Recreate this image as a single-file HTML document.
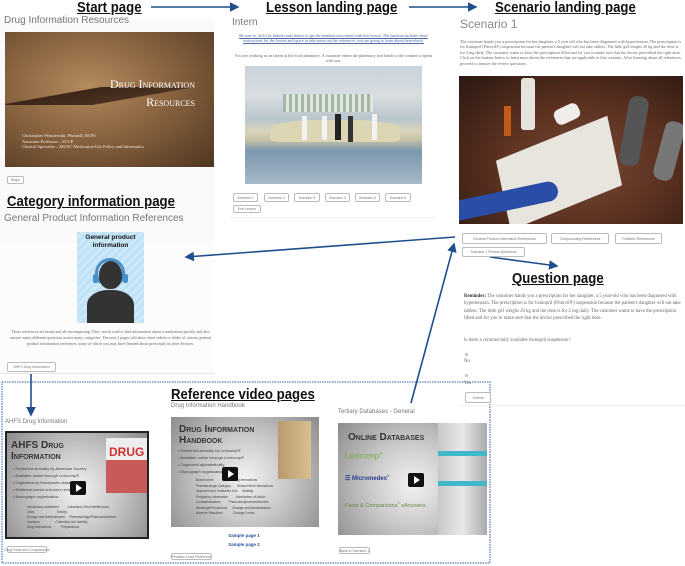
<!DOCTYPE html>
<html><head><meta charset="utf-8">
<style>
*{margin:0;padding:0;box-sizing:border-box}
body{width:685px;height:566px;background:#fff;position:relative;overflow:hidden;font-family:"Liberation Sans",sans-serif;color:#555}
.a{position:absolute}
.h{position:absolute;font-family:"Liberation Sans Narrow","Liberation Sans",sans-serif;font-weight:bold;font-size:15px;color:#111;text-decoration:underline;white-space:nowrap;line-height:13px;transform:scaleX(0.88);transform-origin:0 0}
.t{position:absolute;font-size:10px;color:#777;white-space:nowrap}
.btn{position:absolute;border:1px solid #bbb;border-radius:2px;font-size:3.5px;color:#777;display:flex;align-items:center;justify-content:center;background:#fff;white-space:nowrap}
.sm{position:absolute;font-family:"Liberation Serif",serif;font-size:4.2px;line-height:5.4px;color:#666}
.play{position:absolute;width:16px;height:14px;background:#111;border-radius:2px}
.play:after{content:"";position:absolute;left:6px;top:3px;border-left:6px solid #fff;border-top:4px solid transparent;border-bottom:4px solid transparent}
.vid{position:absolute;background:radial-gradient(circle at 50% 55%,#f2f2f2 0%,#c8c8c8 45%,#8c8c8c 100%);overflow:hidden}
.vt{position:absolute;font-weight:bold;font-variant:small-caps;color:#333;font-size:10px;line-height:11px}
.vb{position:absolute;font-size:4px;color:#444;line-height:7px}
</style></head><body>
<div class="a" style="left:0;top:18px;width:214px;height:226px;background:#fafafa"></div>
<div class="a" style="left:0;top:243px;width:214px;height:131px;background:#fcfcfc;border-bottom:1px solid #e6e6e6"></div>

<div class="h" style="left:77px;top:1px">Start page</div>
<div class="h" style="left:266px;top:1px">Lesson landing page</div>
<div class="h" style="left:495px;top:1px">Scenario landing page</div>
<div class="h" style="left:7px;top:195px">Category information page</div>
<div class="h" style="left:512px;top:272px">Question page</div>
<div class="h" style="left:171px;top:388px">Reference video pages</div>

<svg class="a" style="left:0;top:0" width="685" height="566">
<defs><marker id="m" markerWidth="6" markerHeight="6" refX="5" refY="3" orient="auto"><path d="M0,0 L6,3 L0,6 z" fill="#1f4e8c"/></marker></defs>
<g stroke="#1f4e8c" stroke-width="1.6" fill="none">
<line x1="151" y1="7" x2="238" y2="7" marker-end="url(#m)"/>
<line x1="409" y1="7" x2="476" y2="7" marker-end="url(#m)"/>
<line x1="455" y1="237" x2="186" y2="257" marker-end="url(#m)"/>
<line x1="490" y1="257" x2="557" y2="266" marker-end="url(#m)"/>
<line x1="411" y1="403" x2="454" y2="244" marker-end="url(#m)"/>
<line x1="31" y1="374" x2="31" y2="415" marker-end="url(#m)"/>
</g>
<rect x="2" y="382" width="488" height="181" fill="none" stroke="#2a5fa5" stroke-width="1" stroke-dasharray="1.5,1"/>
</svg>

<div class="t" style="left:4px;top:15px;font-size:10px">Drug Information Resources</div>
<div class="a" style="left:5px;top:32px;width:209px;height:135px;background:radial-gradient(ellipse at 40% 40%,#b48a5e 0%,#8a6440 45%,#4e3521 100%)">
 <div class="a" style="left:0;top:55px;width:209px;height:18px;background:linear-gradient(170deg,transparent 30%,#3a2618 32%,#4a3020 60%,transparent 62%)"></div>
 <div class="a" style="left:75px;top:43px;font-family:'Liberation Serif',serif;font-variant:small-caps;color:#fff;font-size:12px;line-height:18px;text-align:right;width:115px">Drug Information<br>Resources</div>
 <div class="a" style="left:17px;top:101px;font-family:'Liberation Serif',serif;color:#f4e6d6;font-size:4.5px;line-height:5.5px">Christopher Wisniewski, PharmD, BCPS<br>Associate Professor – SCCP<br>Clinical Specialist – MUSC Medication Use Policy and Informatics</div>
</div>
<div class="btn" style="left:7px;top:176px;width:17px;height:8px">Begin</div>

<div class="t" style="left:232px;top:17px;font-size:10px">Intern</div>
<div class="sm" style="left:232px;top:33px;width:203px;text-align:center;color:#4a6aa8;text-decoration:underline">Be sure to click the linked cards below to get the handout associated with this lesson. The handout includes brief instructions for the lesson and space to take notes on the references you are going to learn about henceforth.</div>
<div class="sm" style="left:232px;top:53px;width:203px;text-align:center">You are working as an intern at the local pharmacy. A customer enters the pharmacy and heads to the counter to speak with you.</div>
<div class="a" style="left:245px;top:66px;width:177px;height:118px;background:linear-gradient(180deg,#c9d3da 0%,#d8dde0 25%,#b9c6cd 45%,#d9d4bc 55%,#c8c3a6 62%,#7c97ad 72%,#a7b9c8 100%)">
 <div class="a" style="left:38px;top:28px;width:90px;height:18px;background:repeating-linear-gradient(90deg,#9fb8a8 0 3px,#e4e4dc 3px 6px)"></div>
 <div class="a" style="left:25px;top:54px;width:130px;height:22px;border-radius:40% 40% 10% 10%;background:#ddd6b4"></div>
 <div class="a" style="left:57px;top:50px;width:5px;height:24px;background:#f2f2f2"></div>
 <div class="a" style="left:77px;top:50px;width:5px;height:24px;background:#f2f2f2"></div>
 <div class="a" style="left:90px;top:48px;width:6px;height:26px;background:#222"></div>
 <div class="a" style="left:103px;top:50px;width:5px;height:26px;background:#333"></div>
 <div class="a" style="left:127px;top:48px;width:5px;height:26px;background:#f2f2f2"></div>
</div>
<div class="btn" style="left:233px;top:193px;width:25px;height:9px">Scenario 1</div>
<div class="btn" style="left:264px;top:193px;width:25px;height:9px">Scenario 2</div>
<div class="btn" style="left:294px;top:193px;width:26px;height:9px">Scenario 3</div>
<div class="btn" style="left:325px;top:193px;width:25px;height:9px">Scenario 4</div>
<div class="btn" style="left:355px;top:193px;width:25px;height:9px">Scenario 5</div>
<div class="btn" style="left:385px;top:193px;width:26px;height:9px">Scenario 6</div>
<div class="btn" style="left:233px;top:205px;width:28px;height:8px">End Lesson</div>
<div class="a" style="left:230px;top:217px;width:206px;height:1px;background:#eee"></div>

<div class="t" style="left:460px;top:17px;font-size:12px;color:#888">Scenario 1</div>
<div class="sm" style="left:460px;top:39px;width:223px">The customer hands you a prescription for her daughter, a 5 year old who has been diagnosed with hypertension. The prescription is for lisinopril (Prinivil®) suspension because the patient's daughter will not take tablets. The little girl weighs 20 kg and the dose is for 2 mg daily. The customer wants to have the prescription filled and for you to make sure that the doctor prescribed the right dose. Click on the buttons below to learn more about the references that are applicable to this scenario. After learning about all references, proceed to answer the review questions.</div>
<div class="a" style="left:459px;top:76px;width:224px;height:148px;background:radial-gradient(ellipse at 55% 60%,#7a4a35 0%,#5a3020 50%,#2a1812 100%);overflow:hidden">
 <div class="a" style="left:62px;top:2px;width:14px;height:52px;background:#e6e2dc;border-radius:3px"></div>
 <div class="a" style="left:45px;top:30px;width:7px;height:30px;background:#c25a1c"></div>
 <div class="a" style="left:95px;top:30px;width:26px;height:16px;background:#f0eeea;border-radius:6px;transform:rotate(-25deg)"></div>
 <div class="a" style="left:165px;top:20px;width:20px;height:70px;background:#555;border-radius:8px;transform:rotate(10deg)"></div>
 <div class="a" style="left:200px;top:45px;width:20px;height:60px;background:#777;border-radius:8px;transform:rotate(15deg)"></div>
 <div class="a" style="left:40px;top:62px;width:120px;height:70px;background:#e8e5de;transform:rotate(-22deg) skewX(-10deg)"></div>
 <div class="a" style="left:-10px;top:115px;width:110px;height:20px;background:#2a4ea8;border-radius:10px;transform:rotate(-12deg)"></div>
</div>
<div class="btn" style="left:462px;top:233px;width:85px;height:11px">General Product Information References</div>
<div class="btn" style="left:551px;top:233px;width:58px;height:11px">Compounding References</div>
<div class="btn" style="left:615px;top:233px;width:47px;height:11px">Pediatric References</div>
<div class="btn" style="left:462px;top:247px;width:63px;height:10px">Scenario 1 Review Questions</div>

<div class="t" style="left:4px;top:213px;font-size:10px">General Product Information References</div>
<div class="a" style="left:77px;top:232px;width:67px;height:91px;background:repeating-linear-gradient(135deg,#bfe2f7 0 3px,#cde9fa 3px 6px)">
 <div class="a" style="left:0;top:2px;width:67px;text-align:center;font-weight:bold;font-size:6.5px;line-height:8px;color:#111">General product<br>information</div>
 <div class="a" style="left:18px;top:26px;width:30px;height:30px;border:3px solid #4a90c8;border-bottom-color:transparent;border-radius:50%"></div>
 <div class="a" style="left:22px;top:29px;width:23px;height:28px;background:#333;border-radius:50% 50% 45% 45%"></div>
 <div class="a" style="left:10px;top:58px;width:47px;height:33px;background:#333;border-radius:45% 45% 0 0"></div>
 <div class="a" style="left:16px;top:42px;width:5px;height:9px;background:#4a90c8;border-radius:2px"></div>
 <div class="a" style="left:46px;top:42px;width:5px;height:9px;background:#4a90c8;border-radius:2px"></div>
</div>
<div class="sm" style="left:7px;top:329px;width:207px;text-align:center;font-size:4px;line-height:6px">These references are broad and all encompassing. They can be used to find information about a medication quickly and also answer many different questions across many categories. The next 3 pages will show short videos or slides of various general product information references, some of which you may have learned about previously in other lectures.</div>
<div class="btn" style="left:7px;top:362px;width:49px;height:10px">AHFS Drug Information</div>

<div class="sm" style="left:464px;top:293px;width:219px;font-size:4.8px;line-height:7.3px"><b style="color:#333">Reminder:</b> The customer hands you a prescription for her daughter, a 5 year-old who has been diagnosed with hypertension. The prescription is for lisinopril (Prinivil®) suspension because the patient's daughter will not take tablets. The little girl weighs 20 kg and the dose is for 2 mg daily. The customer wants to have the prescription filled and for you to make sure that the doctor prescribed the right dose.</div>
<div class="sm" style="left:464px;top:338px;font-size:4.8px">Is there a commercially available lisinopril suspension?</div>
<div class="a" style="left:465px;top:353px;width:3px;height:3px;border:1px solid #bbb;border-radius:50%"></div>
<div class="sm" style="left:464px;top:359px;font-size:4.8px">No</div>
<div class="a" style="left:465px;top:374px;width:3px;height:3px;border:1px solid #bbb;border-radius:50%"></div>
<div class="sm" style="left:464px;top:381px;font-size:4.8px">Yes</div>
<div class="btn" style="left:465px;top:392px;width:26px;height:11px">Submit</div>
<div class="a" style="left:460px;top:405px;width:225px;height:1px;background:#f0f0f0"></div>

<div class="t" style="left:5px;top:419px;font-size:6px">AHFS Drug Information</div>
<div class="vid" style="left:5px;top:431px;width:144px;height:108px;border:2px solid #222">
 <div class="vt" style="left:4px;top:7px">AHFS Drug<br>Information</div>
 <div class="a" style="left:99px;top:5px;width:42px;height:55px;background:linear-gradient(#eee 0 40%,#c85a5a 40%)"><div style="color:#c33;font-weight:bold;font-size:12px;margin:7px 0 0 3px">DRUG</div></div>
 <div class="vb" style="left:6px;top:32px">• Published annually by American Society<br>• Available online through Lexicomp®<br>• Organized by therapeutic classification<br>• Evidence-based and peer-reviewed<br>• Monograph organization</div>
 <div class="vb" style="left:20px;top:72px;font-size:3.2px;line-height:5px">Introductory statement &nbsp;&nbsp;&nbsp;&nbsp;&nbsp;&nbsp;&nbsp;&nbsp; Laboratory Test Interferences<br>Uses &nbsp;&nbsp;&nbsp;&nbsp;&nbsp;&nbsp;&nbsp;&nbsp;&nbsp;&nbsp;&nbsp;&nbsp;&nbsp;&nbsp;&nbsp;&nbsp;&nbsp;&nbsp;&nbsp;&nbsp;&nbsp;&nbsp;&nbsp; Toxicity<br>Dosage and Administration &nbsp;&nbsp;&nbsp; Pharmacology/Pharmacokinetics<br>Cautions &nbsp;&nbsp;&nbsp;&nbsp;&nbsp;&nbsp;&nbsp;&nbsp;&nbsp;&nbsp;&nbsp;&nbsp;&nbsp;&nbsp;&nbsp;&nbsp; Chemistry and stability<br>Drug Interactions &nbsp;&nbsp;&nbsp;&nbsp;&nbsp;&nbsp;&nbsp;&nbsp;&nbsp; Preparations</div>
 <div class="play" style="left:63px;top:48px"></div>
</div>
<div class="btn" style="left:7px;top:546px;width:40px;height:7px">Drug Facts and Comparisons</div>

<div class="t" style="left:171px;top:403px;font-size:6px">Drug Information Handbook</div>
<div class="vid" style="left:171px;top:417px;width:148px;height:110px">
 <div class="vt" style="left:8px;top:7px">Drug Information<br>Handbook</div>
 <div class="a" style="left:107px;top:4px;width:33px;height:58px;background:linear-gradient(90deg,#b99a6c,#d8bf92)"></div>
 <div class="vb" style="left:7px;top:30px">• Published annually by Lexicomp®<br>• Available online through Lexicomp®<br>• Organized alphabetically<br>• Monograph organization</div>
 <div class="vb" style="left:25px;top:61px;font-size:3.2px;line-height:5.5px">Brand name &nbsp;&nbsp;&nbsp;&nbsp;&nbsp;&nbsp;&nbsp;&nbsp;&nbsp;&nbsp;&nbsp;&nbsp;&nbsp;&nbsp;&nbsp;&nbsp;&nbsp;&nbsp;&nbsp;&nbsp; Drug Interactions<br>Pharmacologic Category &nbsp;&nbsp;&nbsp;&nbsp;&nbsp; Ethanol/Herb Interactions<br>Approved and Unlabeled Use &nbsp;&nbsp;&nbsp; Stability<br>Pregnancy Information &nbsp;&nbsp;&nbsp;&nbsp;&nbsp;&nbsp;&nbsp; Mechanism of Action<br>Contraindications &nbsp;&nbsp;&nbsp;&nbsp;&nbsp;&nbsp;&nbsp; Pharmacodynamics/Kinetics<br>Warnings/Precautions &nbsp;&nbsp;&nbsp;&nbsp; Dosage and Administration<br>Adverse Reactions &nbsp;&nbsp;&nbsp;&nbsp;&nbsp;&nbsp;&nbsp;&nbsp;&nbsp;&nbsp; Dosage Forms</div>
 <div class="play" style="left:51px;top:50px"></div>
</div>
<div class="a" style="left:226px;top:531px;font-size:4.5px;font-weight:bold;color:#2a4f9c;line-height:9px;text-align:center;width:36px">Sample page 1<br>Sample page 2</div>
<div class="btn" style="left:171px;top:553px;width:41px;height:7px">Pediatric Dose Reference</div>

<div class="t" style="left:338px;top:409px;font-size:6px">Tertiary Databases - General</div>
<div class="vid" style="left:338px;top:423px;width:149px;height:112px">
 <div class="a" style="left:100px;top:0;width:49px;height:112px;background:linear-gradient(90deg,#c8c8c8,#e8e8e8,#aaa)"></div>
 <div class="a" style="left:100px;top:28px;width:49px;height:5px;background:#41b8c8"></div>
 <div class="a" style="left:100px;top:58px;width:49px;height:5px;background:#41b8c8"></div>
 <div class="vt" style="left:10px;top:9px">Online Databases</div>
 <div class="a" style="left:7px;top:28px;color:#7aa84a;font-size:8px">Lexicomp<sup style="font-size:4px">®</sup></div>
 <div class="a" style="left:7px;top:51px;color:#2a3a8c;font-size:6px;font-weight:bold">☰ Micromedex<sup style="font-size:3px">®</sup></div>
 <div class="a" style="left:7px;top:78px;color:#6a8a4a;font-size:5.5px">Facts &amp; Comparisons<sup style="font-size:3px">®</sup> eAnswers</div>
 <div class="play" style="left:70px;top:50px"></div>
</div>
<div class="btn" style="left:339px;top:547px;width:31px;height:7px">Back to Scenario 1</div>
</body></html>
